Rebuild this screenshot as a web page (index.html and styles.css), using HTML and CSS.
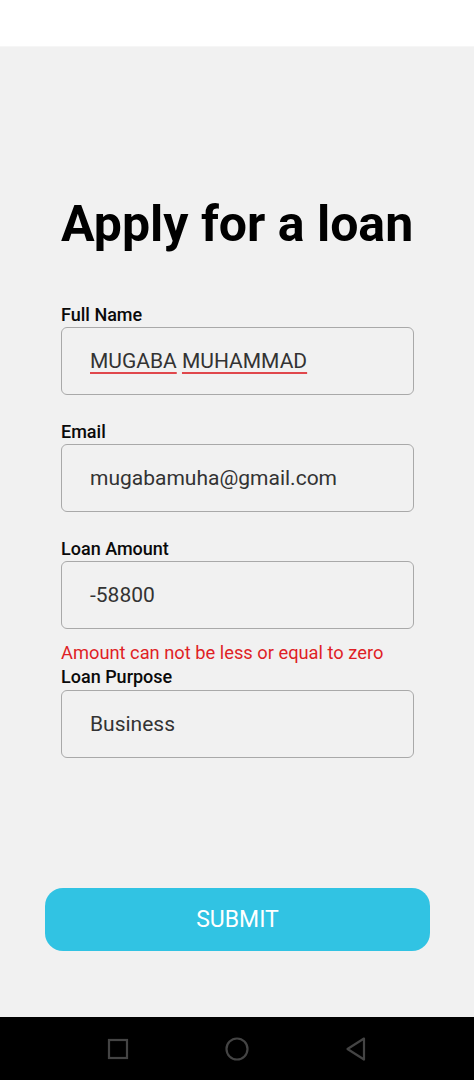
FILE: index.html
```html
<!DOCTYPE html>
<html lang="en">
<head>
<meta charset="utf-8">
<title>Apply for a loan</title>
<link rel="stylesheet" href="styles.css">
</head>
<body>
<div class="screen">
  <div class="status-bar"></div>
  <main class="main">
    <h1 class="title">Apply for a loan</h1>
    <form class="form">
      <div class="field">
        <label class="label">Full Name</label>
        <div class="input"><span class="value"><span class="misspelled">MUGABA</span> <span class="misspelled">MUHAMMAD</span></span></div>
      </div>
      <div class="field">
        <label class="label">Email</label>
        <div class="input"><span class="value">mugabamuha@gmail.com</span></div>
      </div>
      <div class="field field-error">
        <label class="label">Loan Amount</label>
        <div class="input"><span class="value">-58800</span></div>
        <div class="error">Amount can not be less or equal to zero</div>
      </div>
      <div class="field field-tight">
        <label class="label">Loan Purpose</label>
        <div class="input"><span class="value">Business</span></div>
      </div>
    </form>
    <button class="submit" type="button">SUBMIT</button>
  </main>
  <nav class="nav-bar">
    <span class="nav-slot">
      <svg width="22" height="22" viewBox="0 0 22 22"><rect x="2" y="2" width="18" height="18" fill="none" stroke="#444" stroke-width="2.2"/></svg>
    </span>
    <span class="nav-slot">
      <svg width="26" height="26" viewBox="0 0 26 26"><circle cx="13" cy="13" r="10.5" fill="none" stroke="#444" stroke-width="2.2"/></svg>
    </span>
    <span class="nav-slot">
      <svg width="22" height="26" viewBox="0 0 22 26"><path d="M19 2.5 L2.5 13 L19 23.5 Z" fill="none" stroke="#444" stroke-width="2.2" stroke-linejoin="round"/></svg>
    </span>
  </nav>
</div>
</body>
</html>
```
FILE: styles.css
```css
* { box-sizing: border-box; }
html, body { margin: 0; padding: 0; }
body {
  font-family: Roboto, "Noto Sans", "Liberation Sans", sans-serif;
  background: #000;
}
.screen {
  width: 474px;
  height: 1080px;
  display: flex;
  flex-direction: column;
}
.status-bar {
  height: 47px;
  background: #fff;
  border-bottom: 1px solid #f6f6f6;
}
.main {
  flex: 1;
  background: #f1f1f1;
  display: flex;
  flex-direction: column;
  padding: 149px 0 66px;
}
.title {
  margin: 0 0 0 61px;
  font-size: 50px;
  line-height: 56px;
  font-weight: 700;
  color: #000;
}
.form {
  margin: 53px 0 0 61px;
  width: 353px;
  display: flex;
  flex-direction: column;
}
.field {
  display: flex;
  flex-direction: column;
  margin-bottom: 27px;
}
.field-error { margin-bottom: 4px; }
.label {
  font-size: 18px;
  line-height: 20px;
  font-weight: 500;
  color: #0a0a0a;
  margin-bottom: 2px;
}
.field-tight .label { margin-bottom: 3px; }
.input {
  height: 68px;
  border: 1px solid #a9a9a9;
  border-radius: 6px;
  padding: 0 0 0 28px;
  display: flex;
  align-items: center;
  font-size: 21px;
  line-height: 24px;
  color: #333;
}
.value { white-space: pre; }
.misspelled {
  text-decoration: underline solid #e0474c 2px;
  text-underline-offset: 4px;
}
.error {
  margin-top: 14px;
  font-size: 18.3px;
  line-height: 20px;
  color: #df1f26;
}
.submit {
  margin: auto 0 0 45px;
  width: 385px;
  height: 63px;
  border: none;
  border-radius: 18px;
  background: #31c3e3;
  color: #fff;
  font-family: Roboto, "Noto Sans", "Liberation Sans", sans-serif;
  font-size: 23px;
  font-weight: 400;
  padding: 0;
}
.nav-bar {
  height: 63px;
  background: #000;
  display: flex;
  justify-content: center;
  align-items: center;
}
.nav-slot {
  width: 119px;
  display: flex;
  justify-content: center;
  align-items: center;
}
.nav-slot svg { display: block; }
```
